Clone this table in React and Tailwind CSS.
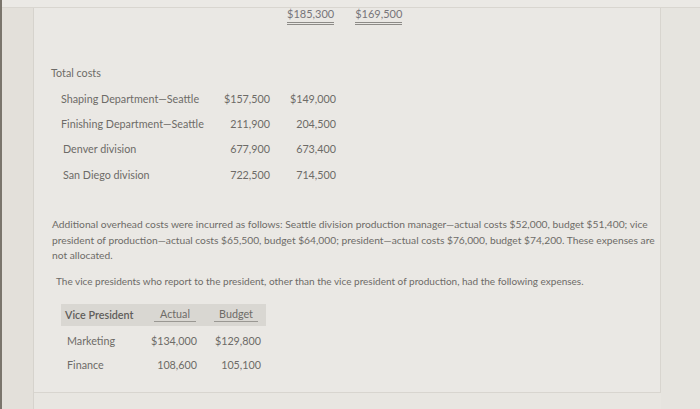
export default function App() {
  const txt = "text-[#6d6b67]";
  return (
    <div
      className="w-[700px] h-[409px] overflow-hidden bg-[#e8e6e1] flex flex-col border-l-2 border-[#7a756c]"
      style={{ fontFamily: "Lato, 'Open Sans', sans-serif" }}
    >
      <div className="h-[8px] shrink-0 bg-[#ebe9e5] border-b border-[#d9d6d0]" />
      <div className="flex flex-1">
        <div className="w-[32px] shrink-0 bg-[#e3e0da] border-r border-[#d6d3cd]" />
        <div className={`w-[627px] shrink-0 h-[385px] bg-[#eae8e4] border-r border-b border-[#d8d5cf] flex flex-col text-[10.75px] leading-[12px] ${txt}`}>
          {/* top totals */}
          <div className="flex pl-[253px]">
            <span className="pb-[2px] border-b-[3px] border-double border-[#8d8b87] text-[#77757a] text-[11px]">$185,300</span>
            <span className="ml-[21px] pb-[2px] border-b-[3px] border-double border-[#8d8b87] text-[#77757a] text-[11px]">$169,500</span>
          </div>
          <div className="mt-[42px] pl-[17px]">Total costs</div>
          {[
            ["Shaping Department—Seattle", "$157,500", "$149,000"],
            ["Finishing Department—Seattle", "211,900", "204,500"],
            ["Denver division", "677,900", "673,400"],
            ["San Diego division", "722,500", "714,500"],
          ].map(([l, a, b], i) => (
            <div
              key={l}
              className={`flex ${i === 0 ? "mt-[14px]" : i === 3 ? "mt-[14px]" : "mt-[13px]"} ${i >= 2 ? "pl-[29px]" : "pl-[27px]"}`}
            >
              <span className={i >= 2 ? "w-[146px]" : "w-[148px]"}>{l}</span>
              <span className="w-[61px] text-right">{a}</span>
              <span className="w-[66px] text-right">{b}</span>
            </div>
          ))}
          <p className="mt-[36px] ml-[18px] w-[603px] text-[10.25px] leading-[15.5px]">
            Additional overhead costs were incurred as follows: Seattle division production manager—actual costs $52,000, budget $51,400; vice president of production—actual costs $65,500, budget $64,000; president—actual costs $76,000, budget $74,200. These expenses are not allocated.
          </p>
          <p className="mt-[11px] pl-[22px] text-[10px]">
            The vice presidents who report to the president, other than the vice president of production, had the following expenses.
          </p>
          <div className="mt-[17px] ml-[27px] w-[205px] h-[22px] bg-[#d9d7d2] flex items-center">
            <span className="w-[89px] pl-[4px] text-[#5f5d5a] font-semibold">Vice President</span>
            <span className="w-[50px] flex justify-center">
              <span className="px-[6px] pb-[1px] border-b border-[#9a9893]">Actual</span>
            </span>
            <span className="w-[66px] flex justify-center pl-[6px]">
              <span className="px-[5px] pb-[1px] border-b border-[#9a9893]">Budget</span>
            </span>
          </div>
          <div className="mt-[9px] ml-[27px] flex">
            <span className="w-[89px] pl-[6px]">Marketing</span>
            <span className="w-[47px] text-right">$134,000</span>
            <span className="w-[64px] text-right">$129,800</span>
          </div>
          <div className="mt-[12px] ml-[27px] flex">
            <span className="w-[89px] pl-[6px]">Finance</span>
            <span className="w-[47px] text-right">108,600</span>
            <span className="w-[64px] text-right">105,100</span>
          </div>
        </div>
        <div className="flex-1 bg-[#e6e4df]" />
      </div>
    </div>
  );
}
